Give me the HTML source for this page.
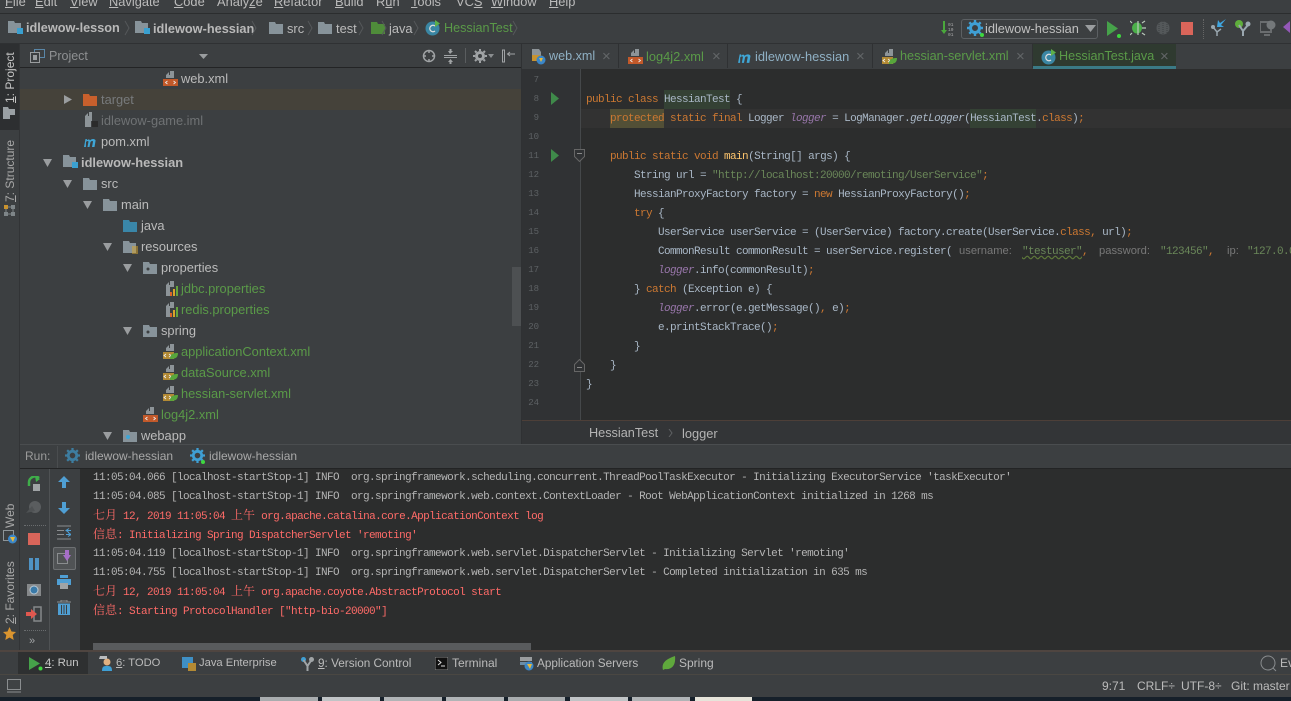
<!DOCTYPE html>
<html><head><meta charset="utf-8"><style>
html,body{margin:0;padding:0;background:#3c3f41}
#r{position:relative;width:1291px;height:701px;overflow:hidden;background:#3c3f41;font:12.85px "Liberation Sans","Noto Sans CJK SC",sans-serif;color:#bbb}
.a,.t,svg.i,.c,.l{position:absolute}
.t{white-space:pre;line-height:21px;height:21px}
.b{font-weight:bold}.g{color:#5a9a48}
.c{left:0;margin-top:1px;white-space:pre;font:11px/19px "Liberation Mono","Noto Serif CJK SC",monospace;letter-spacing:-.6px;color:#a9b7c6;height:19px}
.l{left:93px;margin-top:1px;white-space:pre;font:11px/19px "Liberation Mono","Noto Serif CJK SC",monospace;letter-spacing:-.6px;color:#b4b4b4;height:19px}
.l.e{color:#ff6b68;margin-top:-1px}
.l b{font:12px/19px "Noto Serif CJK SC",serif;letter-spacing:0}
.k{color:#cc7832}.s{color:#6a8759}.f{color:#9876aa;font-style:italic}.m{color:#ffc66d}
.n{position:absolute;left:520px;width:19px;text-align:right;font:9px/19px "Liberation Mono",monospace;color:#5d6164}
.h{position:absolute;font:11.2px/19px "Liberation Sans",sans-serif;color:#787878;white-space:pre}
.v{transform:rotate(-90deg);transform-origin:0 0;white-space:pre;position:absolute;font-size:12px;line-height:14px}
u{text-decoration:underline}
.x{position:absolute;top:47px;font-size:15px;line-height:20px;color:#636668}
</style></head><body><div id="r">
<svg width="0" height="0" style="position:absolute"><defs>
<symbol id="fo" viewBox="0 0 14 12"><path d="M0 0h6l1 2h7v10H0z" fill="#87939a"/></symbol>
<symbol id="mod" viewBox="0 0 15 14"><path d="M0 0h6l1 2h6v10H0z" fill="#87939a"/><rect x="9" y="7" width="6" height="6" fill="#3aa0d0"/></symbol>
<symbol id="xml" viewBox="0 0 15 16"><path d="M3 7V4l3-3v3h1V0h4v7z" fill="#8d9498"/><rect x="0" y="8" width="15" height="7" fill="#c2592a"/><path d="M4.500 10l-2 1.500 2 1.500M10.500 10l2 1.500-2 1.500" stroke="#eee" fill="none" stroke-width=".8"/></symbol>
<symbol id="sx" viewBox="0 0 15 16"><path d="M3 7V4l3-3v3h1V0h4v7z" fill="#8d9498"/><rect x="0" y="8" width="11" height="7" fill="#b38a34"/><path d="M3 10l-2 1.500 2 1.500M6 10l2 1.500-2 1.500" stroke="#eee" fill="none" stroke-width=".8"/><path d="M7 15c0-5 3-6 8-6 0 5-3 6-8 6z" fill="#57a63c"/></symbol>
<symbol id="pr" viewBox="0 0 14 16"><path d="M1 15V4l3-3v3h1V0h4v6H5v9z" fill="#8d9498"/><rect x="5" y="11" width="2" height="4" fill="#d9662a"/><rect x="8" y="8" width="2" height="7" fill="#d9a52a"/><rect x="11" y="5" width="2" height="10" fill="#65a63c"/></symbol>
<symbol id="ar" viewBox="0 0 9 8"><path d="M0 0h9L4.500 8z" fill="#9a9d9f"/></symbol>
<symbol id="gr" viewBox="0 0 16 16"><circle cx="8" cy="8" r="4.500" fill="none" stroke="#3f9fd4" stroke-width="3"/><path d="M8 0v3M8 13v3M0 8h3M13 8h3M2.300 2.300l2.100 2.100M11.600 11.600l2.100 2.100M2.300 13.700l2.100-2.100M11.600 4.400l2.100-2.100" stroke="#3f9fd4" stroke-width="2.400"/></symbol>
<symbol id="cl" viewBox="0 0 16 16"><circle cx="7.500" cy="8.500" r="7" fill="#3a86a3"/><path d="M10 6a3.200 3.200 0 1 0 0 5" fill="none" stroke="#ddd" stroke-width="1.300"/><path d="M10 0l5 3.500-5 3.500z" fill="#5cb04a"/></symbol>
<symbol id="mm" viewBox="0 0 14 11"><path d="M1 11L2.500 3h1.500l-.3 1.500C4.800 3.200 6.500 2.700 7 4.500 8.200 3 11.600 2.200 12.600 4.500L11.500 11H9l1-5.500c-.5-1-1.800-.5-2.500.5L6.500 11H4.500l1-5.500c-.5-1-1.800-.5-2.500.5L2.900 11z" fill="#3fa6d6"/></symbol>
</defs></svg>

<!-- menu -->
<div class="a" style="left:0;top:0;width:1291px;height:13px;background:#3c3f41;border-bottom:1px solid #2b2d2e;overflow:hidden">
<span class="t" style="left:5px;top:-9px"><u>F</u>ile</span><span class="t" style="left:35px;top:-9px"><u>E</u>dit</span><span class="t" style="left:70px;top:-9px"><u>V</u>iew</span><span class="t" style="left:109px;top:-9px"><u>N</u>avigate</span><span class="t" style="left:174px;top:-9px"><u>C</u>ode</span><span class="t" style="left:217px;top:-9px">Analy<u>z</u>e</span><span class="t" style="left:274px;top:-9px"><u>R</u>efactor</span><span class="t" style="left:335px;top:-9px"><u>B</u>uild</span><span class="t" style="left:376px;top:-9px">R<u>u</u>n</span><span class="t" style="left:411px;top:-9px"><u>T</u>ools</span><span class="t" style="left:456px;top:-9px">VC<u>S</u></span><span class="t" style="left:491px;top:-9px"><u>W</u>indow</span><span class="t" style="left:549px;top:-9px"><u>H</u>elp</span>
</div>

<!-- nav bar -->
<div class="a" style="left:0;top:43px;width:1291px;height:1px;background:#2f3133"></div>
<svg class="i" style="left:8px;top:21px" width="15" height="14"><use href="#mod"/></svg>
<span class="t b" style="left:26px;top:18px;color:#b9b9b9;font-size:12.7px">idlewow-lesson</span>
<svg class="i" style="left:135px;top:21px" width="15" height="14"><use href="#mod"/></svg>
<span class="t b" style="left:153px;top:18px;color:#b9b9b9;font-size:12.75px">idlewow-hessian</span>
<svg class="i" style="left:269px;top:22px" width="14" height="12"><use href="#fo"/></svg>
<span class="t" style="left:287px;top:18px">src</span>
<svg class="i" style="left:318px;top:22px" width="14" height="12"><use href="#fo"/></svg>
<span class="t" style="left:336px;top:18px">test</span>
<svg class="i" style="left:371px;top:22px" width="14" height="12"><path d="M0 0h6l1 2h7v10H0z" fill="#4f8c3a"/></svg>
<span class="t" style="left:389px;top:18px">java</span>
<svg class="i" style="left:425px;top:20px" width="16" height="16"><use href="#cl"/></svg>
<span class="t g" style="left:444px;top:18px;font-size:12.6px">HessianTest</span>
<svg class="i" style="left:120px;top:20px" width="300" height="17" fill="none" stroke="#55585a"><path d="M5 1l4 7-4 7M132 1l4 7-4 7M262 1l4 7-4 7"/></svg>
<svg class="i" style="left:303px;top:20px" width="220" height="17" fill="none" stroke="#55585a"><path d="M5 1l4 7-4 7M56 1l4 7-4 7M111 1l4 7-4 7M210 1l4 7-4 7"/></svg>

<!-- toolbar right -->
<svg class="i" style="left:940px;top:20px" width="14" height="16"><path d="M3 1h2v9h2l-3 4-3-4h2z" fill="#4aa83c"/><text x="8" y="6" font-size="4.500" fill="#aaa" font-family="Liberation Mono">01</text><text x="8" y="11" font-size="4.500" fill="#aaa" font-family="Liberation Mono">10</text><text x="8" y="16" font-size="4.500" fill="#aaa" font-family="Liberation Mono">01</text></svg>
<div class="a" style="left:961px;top:19px;width:135px;height:18px;border:1px solid #5c6063;border-radius:3px"></div>
<svg class="i" style="left:967px;top:20px" width="16" height="16"><use href="#gr"/></svg>
<div class="a" style="left:980px;top:33px;width:4px;height:4px;border-radius:2px;background:#3fd83f"></div>
<span class="t" style="left:985px;top:18px;color:#c0c0c0;font-size:12.8px">idlewow-hessian</span>
<svg class="i" style="left:1085px;top:25px" width="11" height="7"><path d="M0 0h11L5.500 7z" fill="#9a9d9f"/></svg>
<svg class="i" style="left:1106px;top:20px" width="16" height="18"><path d="M1 1l11 7.500L1 16z" fill="#46a24a"/><circle cx="13" cy="16" r="2" fill="#3fd83f"/></svg>
<svg class="i" style="left:1130px;top:20px" width="16" height="16"><ellipse cx="7" cy="8" rx="5" ry="5.500" fill="#4cb04a"/><path d="M8 1v14M12 3l3-2M12 8h4M12 13l3 2M2 3L0 1M2 13l-2 2" stroke="#b9c9bb" stroke-width="1.200"/></svg>
<svg class="i" style="left:1155px;top:20px" width="16" height="16"><circle cx="8" cy="8" r="6.500" fill="#54585a"/><path d="M4 2v12M8 1v14M12 2v12" stroke="#3c3f41" stroke-dasharray="1 1"/></svg>
<div class="a" style="left:1181px;top:22px;width:12px;height:13px;background:#d9655a"></div>
<div class="a" style="left:1203px;top:19px;width:1px;height:20px;border-left:1px dotted #666"></div>
<svg class="i" style="left:1211px;top:19px" width="16" height="18"><path d="M15 0l-5 6 3 2H6l1-7 2 3z" fill="#3fa6e0"/><circle cx="2" cy="8" r="2" fill="#9aa7af"/><path d="M2 8l4 5 4-3M6 13v4" stroke="#9aa7af" stroke-width="1.500" fill="none"/></svg>
<svg class="i" style="left:1235px;top:20px" width="16" height="16"><circle cx="4" cy="4" r="4" fill="#5fae3c"/><circle cx="13" cy="4" r="2.500" fill="#9aa7af"/><path d="M4 5l4 6 5-6M8 10v6" stroke="#9aa7af" stroke-width="2" fill="none"/></svg>
<svg class="i" style="left:1260px;top:20px" width="16" height="16"><rect x="0" y="2" width="11" height="10" fill="none" stroke="#6a6d6f" stroke-width="2"/><circle cx="11" cy="5" r="4.500" fill="#74787a"/><path d="M4 15h6" stroke="#6a6d6f" stroke-width="2"/></svg>
<svg class="i" style="left:1283px;top:20px" width="8" height="16"><path d="M7 1L0 7l7 6z" fill="#9458b8"/></svg>

<!-- left strip -->
<div class="a" style="left:0;top:44px;width:19px;height:86px;background:#2d2f31"></div>
<div class="a" style="left:19px;top:44px;width:1px;height:606px;background:#323436"></div>
<span class="v" style="left:3px;top:103px;color:#c6c6c6"><u>1</u>: Project</span>
<svg class="i" style="left:3px;top:107px" width="13" height="12"><path d="M0 0h5l1 2h6v6H7v4H0z" fill="#9aa0a4"/></svg>
<span class="v" style="left:3px;top:202px;color:#a8a8a8"><u>7</u>: Structure</span>
<svg class="i" style="left:4px;top:205px" width="11" height="11"><rect width="4" height="4" fill="#c9932f"/><rect x="7" width="4" height="4" fill="#7e8588"/><rect y="7" width="4" height="4" fill="#7e8588"/><rect x="7" y="7" width="4" height="4" fill="#7e8588"/><path d="M4 2h3M2 4v3M9 4v3M4 9h3" stroke="#7e8588"/></svg>
<span class="v" style="left:3px;top:528px;color:#a8a8a8">Web</span>
<svg class="i" style="left:3px;top:530px" width="14" height="14"><rect x=".5" y=".5" width="10" height="10" fill="none" stroke="#8d9498"/><circle cx="9.500" cy="9" r="4.500" fill="#3a86c8"/><path d="M7 7h5l-2 5z" fill="#e8b93a"/></svg>
<span class="v" style="left:3px;top:624px;color:#a8a8a8"><u>2</u>: Favorites</span>
<svg class="i" style="left:3px;top:627px" width="13" height="13"><path d="M6.500 0l2 4.500 4.500.5-3.300 3 1 5-4.200-2.500L2.300 13l1-5L0 5l4.500-.5z" fill="#d9942f"/></svg>

<!-- project header -->
<svg class="i" style="left:30px;top:49px" width="15" height="14"><rect x="4.500" y=".5" width="10" height="8" fill="none" stroke="#5a87a8"/><rect x=".5" y="3.500" width="9" height="10" fill="#3c3f41" stroke="#9a9d9f"/><rect x="3" y="6" width="4" height="5" fill="#9a9d9f"/></svg>
<span class="t" style="left:49px;top:46px;font-size:12.500px;color:#8e9092">Project</span>
<svg class="i" style="left:199px;top:54px" width="9" height="5"><path d="M0 0h9L4.500 5z" fill="#9a9d9f"/></svg>
<svg class="i" style="left:422px;top:48px" width="14" height="16" fill="none" stroke="#a0a3a5"><circle cx="7" cy="8" r="5.500" stroke-width="1.500"/><path d="M7 2v3M7 11v3M1 8h3M10 8h3" stroke-width="1.500"/></svg>
<svg class="i" style="left:444px;top:48px" width="13" height="16" fill="#a0a3a5"><path d="M0 7h13v1H0zM0 9h13v1H0zM6 6L4 3h1.500V1h2v2H9zM6.500 11l2.500 3H7.500v2h-2v-2H4z"/></svg>
<div class="a" style="left:465px;top:48px;width:1px;height:15px;background:#5a5d5f"></div>
<svg class="i" style="left:473px;top:49px" width="14" height="14"><circle cx="7" cy="7" r="3.500" fill="none" stroke="#a0a3a5" stroke-width="3"/><path d="M7 0v2M7 12v2M0 7h2M12 7h2M2 2l1.500 1.500M10.500 10.500L12 12M2 12l1.500-1.500M10.500 3.500L12 2" stroke="#a0a3a5" stroke-width="2"/></svg>
<svg class="i" style="left:488px;top:54px" width="6" height="4"><path d="M0 0h6L3 4z" fill="#8a8d8f"/></svg>
<svg class="i" style="left:501px;top:49px" width="14" height="14" fill="none" stroke="#a0a3a5"><path d="M1.500 1v12h2V1zM14 5H7M9 3L6.500 5 9 7"/></svg>
<div class="a" style="left:20px;top:67px;width:502px;height:1px;background:#232425"></div>

<!-- tree -->
<div class="a" style="left:20px;top:89px;width:502px;height:21px;background:#45423a"></div>
<svg class="i" style="left:163px;top:71px" width="15" height="16"><use href="#xml"/></svg><span class="t" style="left:181px;top:68px">web.xml</span>
<svg class="i" style="left:64px;top:95px" width="8" height="9"><path d="M0 0l8 4.500L0 9z" fill="#9a9d9f"/></svg>
<svg class="i" style="left:83px;top:94px" width="14" height="12"><path d="M0 0h6l1 2h7v10H0z" fill="#c9602c"/></svg><span class="t" style="left:101px;top:89px;color:#777a7c">target</span>
<svg class="i" style="left:85px;top:112px" width="13" height="16"><path d="M0 15V4l3-3v3h1V0h3v9h-1v6z" fill="#8d9498"/><rect x="7" y="9" width="6" height="6" fill="#2b2b2b"/></svg><span class="t" style="left:101px;top:110px;color:#6f7274">idlewow-game.iml</span>
<svg class="i" style="left:83px;top:136px" width="14" height="11"><use href="#mm"/></svg><span class="t" style="left:101px;top:131px">pom.xml</span>
<svg class="i" style="left:43px;top:159px" width="9" height="8"><use href="#ar"/></svg>
<svg class="i" style="left:63px;top:155px" width="15" height="14"><use href="#mod"/></svg><span class="t b" style="left:81px;top:152px;color:#b9b9b9">idlewow-hessian</span>
<svg class="i" style="left:63px;top:180px" width="9" height="8"><use href="#ar"/></svg>
<svg class="i" style="left:83px;top:178px" width="14" height="12"><use href="#fo"/></svg><span class="t" style="left:101px;top:173px">src</span>
<svg class="i" style="left:83px;top:201px" width="9" height="8"><use href="#ar"/></svg>
<svg class="i" style="left:103px;top:199px" width="14" height="12"><use href="#fo"/></svg><span class="t" style="left:121px;top:194px">main</span>
<svg class="i" style="left:123px;top:220px" width="14" height="12"><path d="M0 0h6l1 2h7v10H0z" fill="#3a86a8"/></svg><span class="t" style="left:141px;top:215px">java</span>
<svg class="i" style="left:103px;top:243px" width="9" height="8"><use href="#ar"/></svg>
<svg class="i" style="left:123px;top:241px" width="15" height="14"><path d="M0 0h6l1 2h6v10H0z" fill="#87939a"/><path d="M9 6h6M9 8h6M9 10h6M9 12h6" stroke="#d9a52a"/></svg><span class="t" style="left:141px;top:236px">resources</span>
<svg class="i" style="left:123px;top:264px" width="9" height="8"><use href="#ar"/></svg>
<svg class="i" style="left:143px;top:262px" width="14" height="12"><path d="M0 0h6l1 2h7v10H0z" fill="#87939a"/><circle cx="5" cy="7" r="1.500" fill="#3c3f41"/></svg><span class="t" style="left:161px;top:257px">properties</span>
<svg class="i" style="left:165px;top:281px" width="14" height="16"><use href="#pr"/></svg><span class="t g" style="left:181px;top:278px">jdbc.properties</span>
<svg class="i" style="left:165px;top:302px" width="14" height="16"><use href="#pr"/></svg><span class="t g" style="left:181px;top:299px">redis.properties</span>
<svg class="i" style="left:123px;top:327px" width="9" height="8"><use href="#ar"/></svg>
<svg class="i" style="left:143px;top:325px" width="14" height="12"><path d="M0 0h6l1 2h7v10H0z" fill="#87939a"/><circle cx="5" cy="7" r="1.500" fill="#3c3f41"/></svg><span class="t" style="left:161px;top:320px">spring</span>
<svg class="i" style="left:163px;top:344px" width="15" height="16"><use href="#sx"/></svg><span class="t g" style="left:181px;top:341px">applicationContext.xml</span>
<svg class="i" style="left:163px;top:365px" width="15" height="16"><use href="#sx"/></svg><span class="t g" style="left:181px;top:362px">dataSource.xml</span>
<svg class="i" style="left:163px;top:386px" width="15" height="16"><use href="#sx"/></svg><span class="t g" style="left:181px;top:383px">hessian-servlet.xml</span>
<svg class="i" style="left:143px;top:407px" width="15" height="16"><use href="#xml"/></svg><span class="t g" style="left:161px;top:404px">log4j2.xml</span>
<svg class="i" style="left:103px;top:432px" width="9" height="8"><use href="#ar"/></svg>
<svg class="i" style="left:123px;top:430px" width="14" height="12"><path d="M0 0h6l1 2h7v10H0z" fill="#87939a"/><circle cx="5" cy="7" r="2" fill="#3fa6d6"/></svg><span class="t" style="left:141px;top:425px">webapp</span>
<div class="a" style="left:512px;top:267px;width:9px;height:59px;background:#4d5052"></div>

<!-- tabs -->
<div class="a" style="left:522px;top:44px;width:769px;height:25px;background:#3c3f41"></div>
<div class="a" style="left:521px;top:44px;width:1px;height:400px;background:#2f3133"></div>
<div class="a" style="left:1033px;top:44px;width:143px;height:24px;background:#2f3a30"></div>
<div class="a" style="left:1033px;top:66px;width:143px;height:3px;background:#3b7a86"></div>
<div class="a" style="left:618px;top:44px;width:1px;height:24px;background:#2f3133"></div><div class="a" style="left:727px;top:44px;width:1px;height:24px;background:#2f3133"></div><div class="a" style="left:872px;top:44px;width:1px;height:24px;background:#2f3133"></div><div class="a" style="left:1032px;top:44px;width:1px;height:24px;background:#2f3133"></div>
<svg class="i" style="left:531px;top:49px" width="15" height="16"><path d="M1 0h7l2 3v8H1z" fill="#8d9498"/><rect x="1" y="6" width="9" height="6" fill="#c9932f"/><circle cx="10" cy="11" r="4.500" fill="#3a86c8"/><path d="M8 9h4l-2 4z" fill="#e8b93a"/></svg>
<span class="t" style="left:549px;top:46px;color:#8fb0c4;font-size:12.6px">web.xml</span><span class="x" style="left:602px">×</span>
<svg class="i" style="left:628px;top:49px" width="15" height="16"><use href="#xml"/></svg>
<span class="t g" style="left:646px;top:46px">log4j2.xml</span><span class="x" style="left:712px">×</span>
<svg class="i" style="left:737px;top:51px" width="15" height="12"><use href="#mm"/></svg>
<span class="t" style="left:755px;top:46px;color:#8fb0c4">idlewow-hessian</span><span class="x" style="left:856px">×</span>
<svg class="i" style="left:882px;top:49px" width="15" height="16"><use href="#sx"/></svg>
<span class="t g" style="left:900px;top:46px;font-size:12.7px">hessian-servlet.xml</span><span class="x" style="left:1016px">×</span>
<svg class="i" style="left:1041px;top:49px" width="16" height="16"><use href="#cl"/></svg>
<span class="t g" style="left:1059px;top:46px;font-size:12.6px">HessianTest.java</span><span class="x" style="left:1160px">×</span>

<!-- editor -->
<div class="a" style="left:522px;top:69px;width:769px;height:352px;background:#2c2d2d"></div>
<div class="a" style="left:522px;top:69px;width:58px;height:352px;background:#303234"></div>
<div class="a" style="left:580px;top:69px;width:1px;height:352px;background:#45484a"></div>
<div class="a" style="left:581px;top:109px;width:710px;height:19px;background:#323232"></div>
<div class="a" style="left:664px;top:90px;width:66px;height:19px;background:#344134"></div>
<div class="a" style="left:610px;top:109px;width:54px;height:19px;background:#524f36"></div>
<div class="a" style="left:970px;top:109px;width:66px;height:19px;background:#344134"></div>
<div class="n" style="top:71px">7</div><div class="n" style="top:90px">8</div><div class="n" style="top:109px">9</div><div class="n" style="top:128px">10</div><div class="n" style="top:147px">11</div><div class="n" style="top:166px">12</div><div class="n" style="top:185px">13</div><div class="n" style="top:204px">14</div><div class="n" style="top:223px">15</div><div class="n" style="top:242px">16</div><div class="n" style="top:261px">17</div><div class="n" style="top:280px">18</div><div class="n" style="top:299px">19</div><div class="n" style="top:318px">20</div><div class="n" style="top:337px">21</div><div class="n" style="top:356px">22</div><div class="n" style="top:375px">23</div><div class="n" style="top:394px">24</div>
<svg class="i" style="left:551px;top:92px" width="8" height="13"><path d="M0 0l8 6.500L0 13z" fill="#3f8a4a"/></svg>
<svg class="i" style="left:551px;top:149px" width="8" height="13"><path d="M0 0l8 6.500L0 13z" fill="#3f8a4a"/></svg>
<svg class="i" style="left:574px;top:149px" width="11" height="13"><path d="M.5.5h10v7l-5 5-5-5z" fill="#303234" stroke="#666"/><path d="M3 4.500h5" stroke="#888"/></svg>
<svg class="i" style="left:574px;top:359px" width="11" height="13"><path d="M.5 12.500h10v-7l-5-5-5 5z" fill="#303234" stroke="#666"/><path d="M3 8.500h5" stroke="#888"/></svg>

<div class="c" style="left:586px;top:90px"><span class="k">public class</span> HessianTest {</div>
<div class="c" style="left:610px;top:109px"><span class="k">protected static final</span> Logger <span class="f">logger</span> = LogManager.<i>getLogger</i>(HessianTest.<span class="k">class</span>)<span class="k">;</span></div>
<div class="c" style="left:610px;top:147px"><span class="k">public static void</span> <span class="m">main</span>(String[] args) {</div>
<div class="c" style="left:634px;top:166px">String url = <span class="s">"http://localhost:20000/remoting/UserService"</span><span class="k">;</span></div>
<div class="c" style="left:634px;top:185px">HessianProxyFactory factory = <span class="k">new</span> HessianProxyFactory()<span class="k">;</span></div>
<div class="c" style="left:634px;top:204px"><span class="k">try</span> {</div>
<div class="c" style="left:658px;top:223px">UserService userService = (UserService) factory.create(UserService.<span class="k">class,</span> url)<span class="k">;</span></div>
<div class="c" style="left:658px;top:242px">CommonResult commonResult = userService.register(</div>
<div class="h" style="left:959px;top:242px">username:</div>
<div class="c" style="left:1022px;top:242px;text-decoration:underline wavy #5f7a3a"><span class="s">"testuser"</span></div><div class="c" style="left:1082px;top:242px"><span class="k">,</span></div>
<div class="h" style="left:1099px;top:242px">password:</div>
<div class="c" style="left:1160px;top:242px"><span class="s">"123456"</span><span class="k">,</span></div>
<div class="h" style="left:1227px;top:242px">ip:</div>
<div class="c" style="left:1247px;top:242px"><span class="s">"127.0.0.1"</span></div>
<div class="c" style="left:658px;top:261px"><span class="f">logger</span>.info(commonResult)<span class="k">;</span></div>
<div class="c" style="left:634px;top:280px">} <span class="k">catch</span> (Exception e) {</div>
<div class="c" style="left:658px;top:299px"><span class="f">logger</span>.error(e.getMessage()<span class="k">,</span> e)<span class="k">;</span></div>
<div class="c" style="left:658px;top:318px">e.printStackTrace()<span class="k">;</span></div>
<div class="c" style="left:634px;top:337px">}</div>
<div class="c" style="left:610px;top:356px">}</div>
<div class="c" style="left:586px;top:375px">}</div>

<!-- editor breadcrumb -->
<div class="a" style="left:522px;top:420px;width:769px;height:1px;background:#4d3f38"></div>
<div class="a" style="left:522px;top:421px;width:769px;height:23px;background:#333537;border-bottom:1px solid #4a4d4f"></div>
<span class="t" style="left:589px;top:423px;color:#b4b4b4;font-size:12.7px">HessianTest</span>
<svg class="i" style="left:668px;top:429px" width="5" height="8"><path d="M1 0l3 4-3 4" fill="none" stroke="#5f6264"/></svg>
<span class="t" style="left:682px;top:423px;color:#b4b4b4">logger</span>

<!-- run header -->
<div class="a" style="left:20px;top:444px;width:502px;height:1px;background:#4a4d4f"></div>
<span class="t" style="left:25px;top:446px;font-size:12px;color:#9a9a9a">Run:</span>
<div class="a" style="left:57px;top:446px;width:1px;height:22px;background:#4a4d4f"></div>
<svg class="i" style="left:65px;top:448px" width="15" height="15"><use href="#gr" opacity=".65"/></svg>
<span class="t" style="left:85px;top:446px;font-size:12px;color:#a8a8a8">idlewow-hessian</span>
<svg class="i" style="left:190px;top:448px" width="15" height="15"><use href="#gr"/></svg>
<div class="a" style="left:201px;top:460px;width:4px;height:4px;border-radius:2px;background:#3fd83f"></div>
<span class="t" style="left:209px;top:446px;font-size:12px;color:#a8a8a8">idlewow-hessian</span>
<div class="a" style="left:20px;top:468px;width:1271px;height:1px;background:#232425"></div>

<!-- run toolbars -->
<div class="a" style="left:49px;top:469px;width:1px;height:181px;background:#4f5254"></div>
<svg class="i" style="left:26px;top:476px" width="16" height="15"><path d="M13 2A6 6 0 0 0 3 7v3" fill="none" stroke="#3fae4a" stroke-width="2.500"/><path d="M9 0l5 3-4 3z" fill="#3fae4a"/><rect x="7" y="8" width="7" height="7" fill="#a0a4a6"/></svg>
<svg class="i" style="left:26px;top:500px" width="16" height="15"><circle cx="9" cy="7" r="6" fill="#5a5d5f"/><path d="M0 13l6-7 3 5z" fill="#4f5254"/></svg>
<div class="a" style="left:24px;top:525px;width:22px;height:0;border-top:1px dotted #6a6d6f"></div>
<div class="a" style="left:28px;top:533px;width:12px;height:12px;background:#d9655a"></div>
<div class="a" style="left:29px;top:558px;width:4px;height:12px;background:#4f93c4"></div><div class="a" style="left:35px;top:558px;width:4px;height:12px;background:#4f93c4"></div>
<svg class="i" style="left:27px;top:582px" width="14" height="14"><rect y="2" width="14" height="12" fill="#85888a"/><circle cx="7" cy="8" r="4" fill="#3a7aa8" stroke="#b9c9d4"/></svg>
<svg class="i" style="left:26px;top:606px" width="16" height="16"><rect x="8" y="1" width="7" height="14" fill="none" stroke="#85888a" stroke-width="1.500"/><path d="M0 6h5V3l6 5-6 5v-3H0z" fill="#e0584f"/></svg>
<div class="a" style="left:24px;top:630px;width:22px;height:0;border-top:1px dotted #6a6d6f"></div>
<span class="t" style="left:29px;top:631px;font-size:11px;color:#a0a3a5">»</span>
<svg class="i" style="left:58px;top:476px" width="12" height="12"><path d="M6 0l6 6H8v6H4V6H0z" fill="#4f9fd4"/></svg>
<svg class="i" style="left:58px;top:502px" width="12" height="12"><path d="M6 12L0 6h4V0h4v6h4z" fill="#4f9fd4"/></svg>
<svg class="i" style="left:57px;top:525px" width="14" height="15" fill="none" stroke="#4f9fd4"><path d="M0 1h14M0 5.500h7M0 9.500h7M0 14h14" stroke="#8a8d8f"/><path d="M9 5.500h5M12 3.500l-3 2 3 2M9 9.500h5M11 7.500l3 2-3 2"/></svg>
<div class="a" style="left:53px;top:547px;width:21px;height:21px;border:1px solid #6d7072;border-radius:2px;background:#505355"></div>
<svg class="i" style="left:57px;top:550px" width="15" height="15"><rect x=".5" y="3.500" width="10" height="10" fill="none" stroke="#8a8d8f"/><path d="M8 0h4v5h2l-4 6-4-6h2z" fill="#a56ec8"/></svg>
<svg class="i" style="left:57px;top:575px" width="14" height="15"><rect x="3" width="8" height="3" fill="#4f9fd4"/><rect y="4" width="14" height="6" fill="#4f9fd4"/><rect x="3" y="8" width="8" height="6" fill="#a0a4a6"/></svg>
<svg class="i" style="left:57px;top:600px" width="14" height="15"><path d="M0 2h14M4 2V0h6v2" stroke="#8a8d8f" fill="none"/><path d="M1 3.500h12V15H1z" fill="#4f9fd4"/><path d="M4.500 5v9M7 5v9M9.500 5v9" stroke="#3c3f41"/></svg>

<!-- console -->
<div class="a" style="left:80px;top:469px;width:1211px;height:181px;background:#2c2d2d"></div>
<div class="l" style="top:468px">11:05:04.066 [localhost-startStop-1] INFO  org.springframework.scheduling.concurrent.ThreadPoolTaskExecutor - Initializing ExecutorService 'taskExecutor'</div>
<div class="l" style="top:487px">11:05:04.085 [localhost-startStop-1] INFO  org.springframework.web.context.ContextLoader - Root WebApplicationContext initialized in 1268 ms</div>
<div class="l e" style="top:506px"><b>七月</b> 12, 2019 11:05:04 <b>上午</b> org.apache.catalina.core.ApplicationContext log</div>
<div class="l e" style="top:525px"><b>信息</b>: Initializing Spring DispatcherServlet 'remoting'</div>
<div class="l" style="top:544px">11:05:04.119 [localhost-startStop-1] INFO  org.springframework.web.servlet.DispatcherServlet - Initializing Servlet 'remoting'</div>
<div class="l" style="top:563px">11:05:04.755 [localhost-startStop-1] INFO  org.springframework.web.servlet.DispatcherServlet - Completed initialization in 635 ms</div>
<div class="l e" style="top:582px"><b>七月</b> 12, 2019 11:05:04 <b>上午</b> org.apache.coyote.AbstractProtocol start</div>
<div class="l e" style="top:601px"><b>信息</b>: Starting ProtocolHandler ["http-bio-20000"]</div>
<div class="a" style="left:93px;top:643px;width:438px;height:7px;background:#595b5d"></div>
<div class="a" style="left:0;top:650px;width:1291px;height:2px;background:#4f4540"></div>

<!-- bottom tool tabs -->
<div class="a" style="left:18px;top:652px;width:70px;height:22px;background:#2e3031"></div>
<div class="a" style="left:0;top:674px;width:1291px;height:1px;background:#4a4742"></div>
<svg class="i" style="left:28px;top:656px" width="15" height="15"><path d="M1 1l11 6.500L1 14z" fill="#46a24a"/><circle cx="12.500" cy="12.500" r="2" fill="#3fd83f"/></svg>
<span class="t" style="left:45px;top:653px;font-size:11.4px;color:#c8c8c8"><u>4</u>: Run</span>
<svg class="i" style="left:99px;top:656px" width="14" height="15"><circle cx="8" cy="6" r="3.500" fill="#e0b080"/><path d="M3 15c0-5 2-5 5-5s5 0 5 5z" fill="#3f9fd4"/><path d="M0 3h8V0H1z" fill="#b8bbbd"/></svg>
<span class="t" style="left:116px;top:653px;font-size:11.2px"><u>6</u>: TODO</span>
<svg class="i" style="left:182px;top:657px" width="14" height="14"><rect width="11" height="11" fill="#3f8fc4"/><rect x="6" y="6" width="8" height="8" fill="#b38a34"/></svg>
<span class="t" style="left:199px;top:653px;font-size:11.2px">Java Enterprise</span>
<svg class="i" style="left:301px;top:657px" width="13" height="14"><circle cx="2.500" cy="2.500" r="2.500" fill="#3f9fd4"/><circle cx="10.500" cy="2.500" r="2.500" fill="#a0a4a6"/><path d="M2.500 3l4 6 4-6M6.500 9v5" stroke="#a0a4a6" stroke-width="2" fill="none"/></svg>
<span class="t" style="left:318px;top:653px;font-size:11.75px"><u>9</u>: Version Control</span>
<svg class="i" style="left:435px;top:657px" width="13" height="13"><rect width="13" height="13" fill="#111" stroke="#888"/><path d="M3 3l3 2.500L3 8M6 9h4" stroke="#ddd" fill="none"/></svg>
<span class="t" style="left:452px;top:653px;font-size:12px">Terminal</span>
<svg class="i" style="left:520px;top:657px" width="14" height="14"><rect width="12" height="4" fill="#9a9d9f"/><rect y="5" width="12" height="3" fill="#6a8da8"/><circle cx="9" cy="9" r="4.500" fill="#3a86c8"/><path d="M7 7h5l-2 5z" fill="#e8b93a"/></svg>
<span class="t" style="left:537px;top:653px;font-size:11.75px">Application Servers</span>
<svg class="i" style="left:662px;top:656px" width="14" height="15"><path d="M1 14c-2-7 3-11 12-14 1 9-3 14-10 13z" fill="#5fa83c"/></svg>
<span class="t" style="left:679px;top:653px;font-size:12px">Spring</span>
<svg class="i" style="left:1260px;top:655px" width="17" height="18" fill="none" stroke="#8a8d8f"><circle cx="8" cy="8" r="7"/><path d="M13 13l3 3"/></svg>
<span class="t" style="left:1280px;top:653px;font-size:12px">Ev</span>

<!-- status -->
<svg class="i" style="left:7px;top:679px" width="14" height="14"><rect x=".5" y=".5" width="13" height="10" fill="#3f4244" stroke="#8a8d8f"/><path d="M0 13h14" stroke="#8a8d8f"/></svg>
<span class="t" style="left:1102px;top:676px;font-size:12px">9:71</span>
<span class="t" style="left:1137px;top:676px;font-size:12px">CRLF÷</span>
<span class="t" style="left:1181px;top:676px;font-size:12px">UTF-8÷</span>
<span class="t" style="left:1231px;top:676px;font-size:12px">Git: master</span>

<!-- taskbar -->
<div class="a" style="left:0;top:697px;width:1291px;height:4px;background:#16202a"></div>
<div class="a" style="left:260px;top:697px;width:58px;height:4px;background:#a8acae"></div>
<div class="a" style="left:322px;top:697px;width:58px;height:4px;background:#c0c4c6"></div>
<div class="a" style="left:384px;top:697px;width:58px;height:4px;background:#b0b4b6"></div>
<div class="a" style="left:446px;top:697px;width:58px;height:4px;background:#b0b4b6"></div>
<div class="a" style="left:508px;top:697px;width:57px;height:4px;background:#a8acae"></div>
<div class="a" style="left:570px;top:697px;width:58px;height:4px;background:#c0c4c6"></div>
<div class="a" style="left:632px;top:697px;width:58px;height:4px;background:#b0b4b6"></div>
<div class="a" style="left:695px;top:697px;width:57px;height:4px;background:#e6e4da"></div>
</div></body></html>
